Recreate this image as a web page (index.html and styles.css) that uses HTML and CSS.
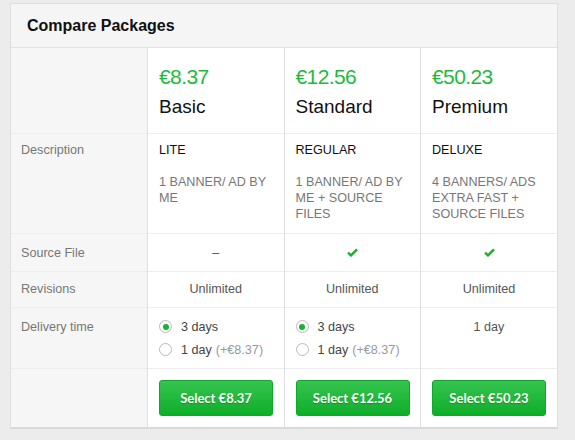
FILE: index.html
```html
<!DOCTYPE html>
<html>
<head>
<meta charset="utf-8">
<link rel="stylesheet" href="styles.css">
</head>
<body>
<div class="card">
  <div class="card-head">Compare Packages</div>
  <table class="cmp">
    <colgroup><col class="c-label"><col><col><col></colgroup>
    <tr class="r-head">
      <td class="lbl"></td>
      <td><div class="price">€8.37</div><div class="pname">Basic</div></td>
      <td><div class="price">€12.56</div><div class="pname">Standard</div></td>
      <td><div class="price">€50.23</div><div class="pname">Premium</div></td>
    </tr>
    <tr class="r-desc">
      <td class="lbl">Description</td>
      <td><div class="dtitle">LITE</div><div class="dtext">1 BANNER/ AD BY ME</div></td>
      <td><div class="dtitle">REGULAR</div><div class="dtext">1 BANNER/ AD BY ME + SOURCE FILES</div></td>
      <td><div class="dtitle">DELUXE</div><div class="dtext">4 BANNERS/ ADS EXTRA FAST + SOURCE FILES</div></td>
    </tr>
    <tr class="r-src">
      <td class="lbl">Source File</td>
      <td class="ctr">–</td>
      <td class="ctr"><svg class="check" width="11" height="9" viewBox="0 0 11 9"><path d="M1 4.6 L4 7.4 L10 1.4" fill="none" stroke="#1bae2c" stroke-width="2.4"/></svg></td>
      <td class="ctr"><svg class="check" width="11" height="9" viewBox="0 0 11 9"><path d="M1 4.6 L4 7.4 L10 1.4" fill="none" stroke="#1bae2c" stroke-width="2.4"/></svg></td>
    </tr>
    <tr class="r-rev">
      <td class="lbl">Revisions</td>
      <td class="ctr">Unlimited</td>
      <td class="ctr">Unlimited</td>
      <td class="ctr">Unlimited</td>
    </tr>
    <tr class="r-del">
      <td class="lbl">Delivery time</td>
      <td>
        <div class="opt"><span class="radio on"></span>3 days</div>
        <div class="opt"><span class="radio"></span>1 day <span class="extra">(+€8.37)</span></div>
      </td>
      <td>
        <div class="opt"><span class="radio on"></span>3 days</div>
        <div class="opt"><span class="radio"></span>1 day <span class="extra">(+€8.37)</span></div>
      </td>
      <td class="ctr">1 day</td>
    </tr>
    <tr class="r-btn">
      <td class="lbl"></td>
      <td class="ctr"><a class="btn">Select €8.37</a></td>
      <td class="ctr"><a class="btn">Select €12.56</a></td>
      <td class="ctr"><a class="btn">Select €50.23</a></td>
    </tr>
  </table>
</div>
</body>
</html>
```

FILE: styles.css
```css
html, body {
  margin: 0;
  padding: 0;
  background: #ececec;
}
body {
  padding: 3px 0 0 10px;
  font-family: "Liberation Sans", Arial, sans-serif;
  font-size: 12.6px;
  color: #555;
}
.card {
  width: 546px;
  background: #fff;
  border: 1px solid #dedede;
  border-bottom: 2px solid #dadada;
}
.card-head {
  height: 44px;
  box-sizing: border-box;
  padding: 13px 0 0 16px;
  background: #f5f5f5;
  border-bottom: 1px solid #e2e2e2;
  font-size: 16px;
  font-weight: bold;
  color: #111;
}
.cmp {
  width: 100%;
  table-layout: fixed;
  border-collapse: collapse;
}
.cmp td {
  border-left: 1px solid #e0e0e0;
  border-top: 1px solid #eeeeee;
  padding: 10px 11px 0 11px;
  vertical-align: top;
  line-height: 16px;
}
.cmp tr:first-child td { border-top: none; }
.cmp td:first-child { border-left: none; }
.lbl {
  background: #f6f6f6;
  color: #777;
}
.cmp td.lbl { padding-left: 10px; }
.ctr { text-align: center; }
.r-head td { height: 85px; box-sizing: border-box; padding-top: 17px; }
.price {
  font-size: 21px;
  letter-spacing: -0.6px;
  color: #1dbb3c;
  line-height: 24px;
}
.pname {
  font-size: 19px;
  color: #111;
  line-height: 22px;
  margin-top: 7px;
}
.r-desc td { height: 100px; box-sizing: border-box; padding-top: 8px; }
.dtitle { color: #111; margin-bottom: 16px; }
.dtext { color: #777; }
.r-src td { height: 38px; box-sizing: border-box; padding-top: 11px; }
.r-rev td { height: 36px; box-sizing: border-box; padding-top: 9px; }
.r-del td { height: 61px; box-sizing: border-box; padding-top: 11px; }
.check { vertical-align: middle; margin-top: -2px; }
.opt {
  display: flex;
  align-items: center;
  color: #444;
  height: 16px;
  margin-bottom: 7px;
}
.radio {
  width: 13px;
  height: 13px;
  box-sizing: border-box;
  border: 1px solid #bbb;
  border-radius: 50%;
  margin-right: 9px;
  position: relative;
  background: #fff;
  flex: none;
}
.radio.on::after {
  content: "";
  position: absolute;
  left: 2.5px;
  top: 2.5px;
  width: 6px;
  height: 6px;
  border-radius: 50%;
  background: #15b331;
}
.extra { color: #999; margin-left: 4px; }
.r-btn td { height: 59px; box-sizing: border-box; padding-top: 11px; }
.btn {
  display: block;
  margin: 0 auto;
  width: 114px;
  height: 36px;
  box-sizing: border-box;
  line-height: 34px;
  border-radius: 3px;
  background: linear-gradient(#36c44f, #0eae29);
  border: 1px solid #10a82a;
  color: #fff;
  font-family: Lato, "Liberation Sans", sans-serif;
  font-weight: bold;
  font-size: 13px;
  text-align: center;
  text-shadow: 0 1px 1px rgba(0,80,0,0.35);
}
```
